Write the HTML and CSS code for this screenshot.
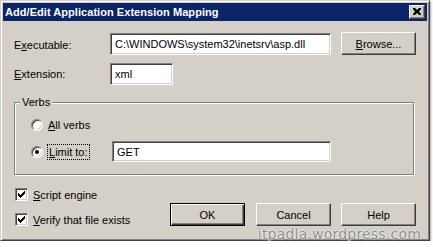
FILE: index.html
```html
<!DOCTYPE html>
<html>
<head>
<meta charset="utf-8">
<link rel="stylesheet" href="styles.css">
</head>
<body>
<div class="window">
  <div class="titlebar">
    <span class="title">Add/Edit Application Extension Mapping</span>
    <div class="close">
      <svg width="8" height="7" viewBox="0 0 8 7"><path d="M0 0h2l2 2 2-2h2v1L6 3.5 8 6v1H6L4 5 2 7H0V6l2-2.5L0 1z" fill="#000"/></svg>
    </div>
  </div>
  <div class="content">
    <div class="row row-exe">
      <span class="lbl">E<u>x</u>ecutable:</span>
      <div class="field field-exe">C:\WINDOWS\system32\inetsrv\asp.dll</div>
      <div class="btn btn-browse"><span><u>B</u>rowse...</span></div>
    </div>
    <div class="row row-ext">
      <span class="lbl"><u>E</u>xtension:</span>
      <div class="field field-ext">xml</div>
    </div>
    <div class="group">
      <span class="legend">Verbs</span>
      <div class="opt opt-all">
        <span class="radio"></span>
        <span class="opt-lbl"><u>A</u>ll verbs</span>
      </div>
      <div class="opt opt-limit">
        <span class="radio checked"></span>
        <span class="opt-lbl"><span class="focus"><u>L</u>imit to:</span></span>
        <div class="field field-get">GET</div>
      </div>
    </div>
    <div class="bottom">
      <div class="checks">
        <div class="chk-row">
          <span class="chk"><svg width="7" height="7" viewBox="0 0 7 7"><path d="M0 2h1v1h1v1h1V3h1V2h1V1h1V0h1v3H6v1H5v1H4v1H3v1H2V6H1V5H0z" fill="#000"/></svg></span>
          <span><u>S</u>cript engine</span>
        </div>
        <div class="chk-row">
          <span class="chk"><svg width="7" height="7" viewBox="0 0 7 7"><path d="M0 2h1v1h1v1h1V3h1V2h1V1h1V0h1v3H6v1H5v1H4v1H3v1H2V6H1V5H0z" fill="#000"/></svg></span>
          <span><u>V</u>erify that file exists</span>
        </div>
      </div>
      <div class="buttons">
        <div class="btn btn-default"><span>OK</span></div>
        <div class="btn btn-cancel"><span>Cancel</span></div>
        <div class="btn"><span>Help</span></div>
      </div>
    </div>
  </div>
  <div class="watermark">itpadla.wordpress.com</div>
</div>
</body>
</html>
```
FILE: styles.css
```css
* { box-sizing: border-box; }
html, body { margin: 0; padding: 0; background: #ffffff; }
body {
  font-family: "Liberation Sans", Arial, sans-serif;
  font-size: 11px;
  color: #000;
}
u { text-decoration: underline; text-underline-offset: 1px; }

.window {
  position: relative;
  width: 430px;
  height: 241px;
  background: #d4d0c8;
  border-style: solid;
  border-width: 1px;
  border-color: #d4d0c8 #404040 #404040 #d4d0c8;
  box-shadow: inset 1px 1px 0 #ffffff, inset -1px -1px 0 #808080, 1px 1px 2px rgba(0,0,0,0.35);
  padding: 2px;
}

.titlebar {
  height: 18px;
  background: #0a246a;
  display: flex;
  align-items: center;
  justify-content: space-between;
  padding: 0 2px 0 2px;
}
.title {
  color: #fff;
  font-weight: bold;
  font-size: 11px;
  letter-spacing: 0.05px;
}
.close {
  width: 16px;
  height: 14px;
  background: #d4d0c8;
  border-style: solid;
  border-width: 1px;
  border-color: #fff #404040 #404040 #fff;
  box-shadow: inset -1px -1px 0 #808080;
  display: flex;
  align-items: center;
  justify-content: center;
  padding: 0 1px 1px 0;
}
.close svg { display: block; }

.content {
  padding: 11px 11px 0 11px;
}

.row { display: flex; }
.lbl { width: 96px; flex: none; }
.row-exe { align-items: flex-end; height: 23px; }
.row-exe .lbl { align-self: center; padding-top: 2px; }
.row-ext { margin-top: 8px; align-items: center; height: 22px; }

.field {
  background: #fff;
  border-style: solid;
  border-width: 1px;
  border-color: #808080 #ffffff #ffffff #808080;
  box-shadow: inset 1px 1px 0 #404040, inset -1px -1px 0 #d4d0c8;
  height: 22px;
  padding: 0 4px;
  display: flex;
  align-items: center;
  white-space: nowrap;
  overflow: hidden;
}
.field-exe { width: 221px; }
.field-ext { width: 63px; }
.field-get { width: 219px; height: 21px; }

.btn {
  width: 75px;
  height: 23px;
  background: #d4d0c8;
  border-style: solid;
  border-width: 1px;
  border-color: #ffffff #404040 #404040 #ffffff;
  box-shadow: inset -1px -1px 0 #808080;
  display: flex;
  align-items: center;
  justify-content: center;
  flex: none;
}
.btn-browse { margin-left: 10px; }
.btn-default {
  border-color: #000;
  box-shadow: inset 1px 1px 0 #ffffff, inset -1px -1px 0 #404040, inset -2px -2px 0 #808080;
}

.group {
  position: relative;
  margin-top: 17px;
  width: 400px;
  height: 73px;
  border: 1px solid #808080;
  box-shadow: inset 1px 1px 0 #ffffff, 1px 1px 0 #ffffff;
  padding: 15px 0 0 16px;
}
.legend {
  position: absolute;
  top: -7px;
  left: 5px;
  padding: 0 2px;
  background: #d4d0c8;
  line-height: 13px;
}
.opt { display: flex; align-items: center; }
.opt-all { height: 13px; }
.opt-limit { margin-top: 10px; height: 21px; }
.radio {
  width: 12px;
  height: 12px;
  border-radius: 50%;
  background: #fff;
  border-style: solid;
  border-width: 1px;
  border-color: #808080 #ffffff #ffffff #808080;
  box-shadow: inset 1px 1px 0 #404040, inset -1px -1px 0 #d4d0c8;
  position: relative;
  flex: none;
}
.radio.checked::after {
  content: "";
  position: absolute;
  left: 3px;
  top: 3px;
  width: 4px;
  height: 4px;
  border-radius: 50%;
  background: #000;
}
.opt-lbl { margin-left: 5px; }
.opt-limit .opt-lbl { width: 65px; flex: none; margin-left: 4px; }
.focus {
  border: 1px dotted #000;
  padding: 1px 1px 1px 1px;
}

.bottom {
  display: flex;
  align-items: flex-end;
  justify-content: space-between;
  margin-top: 13px;
}
.checks { display: flex; flex-direction: column; gap: 12px; }
.chk-row { display: flex; align-items: center; height: 13px; }
.chk {
  width: 13px;
  height: 13px;
  background: #fff;
  border-style: solid;
  border-width: 1px;
  border-color: #808080 #ffffff #ffffff #808080;
  box-shadow: inset 1px 1px 0 #404040, inset -1px -1px 0 #d4d0c8;
  display: flex;
  align-items: center;
  justify-content: center;
  margin-left: 1px;
  margin-right: 5px;
  flex: none;
}
.chk svg { display: block; }
.buttons { display: flex; gap: 10px; }
.btn-cancel { margin-left: 1px; }

.watermark {
  position: absolute;
  right: 8px;
  bottom: -3px;
  line-height: 17px;
  font-family: "DejaVu Sans", Verdana, sans-serif;
  font-size: 14px;
  color: #8c8c8c;
  letter-spacing: 0.2px;
  text-shadow: 0 0 2px #fff, 0 0 1px #fff;
}
```
